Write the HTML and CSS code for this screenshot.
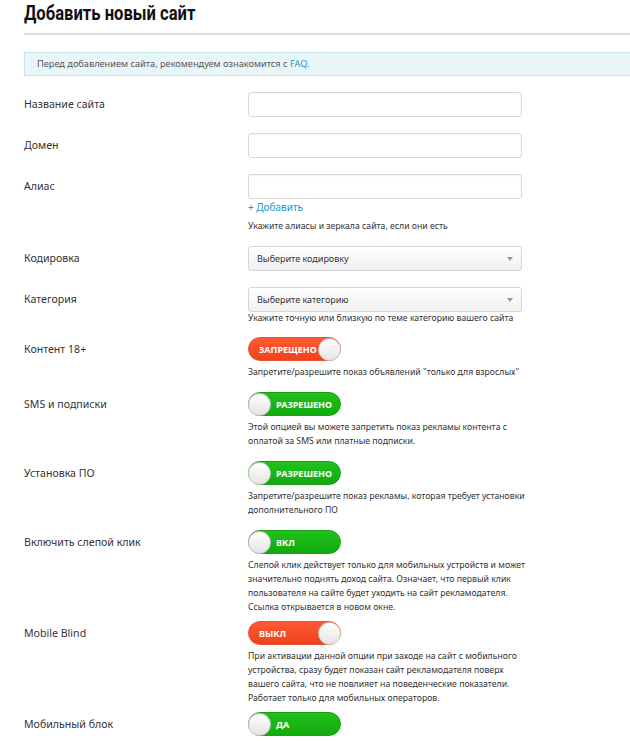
FILE: index.html
```html
<!DOCTYPE html>
<html lang="ru">
<head>
    <meta charset="UTF-8">
    <meta name="viewport" content="width=device-width, initial-scale=1.0">
    <title>Добавить новый сайт</title>
    <link rel="stylesheet" href="styles.css">
</head>
<body>
    <div class="page">
        <h1 class="title"><span>Добавить новый сайт</span></h1>

        <div class="notice">Перед добавлением сайта, рекомендуем ознакомится с <a href="#">FAQ</a>.</div>

        <form class="site-form">
            <div class="row">
                <label class="label">Название сайта</label>
                <div class="field"><input class="input" type="text"></div>
            </div>
            <div class="row">
                <label class="label">Домен</label>
                <div class="field"><input class="input" type="text"></div>
            </div>
            <div class="row row-note">
                <label class="label">Алиас</label>
                <div class="field">
                    <input class="input" type="text">
                    <a class="add-link" href="#">+ Добавить</a>
                    <p class="note note-alias">Укажите алиасы и зеркала сайта, если они есть</p>
                </div>
            </div>
            <div class="row">
                <label class="label">Кодировка</label>
                <div class="field">
                    <div class="select"><span>Выберите кодировку</span><i class="arrow"></i></div>
                </div>
            </div>
            <div class="row row-note">
                <label class="label">Категория</label>
                <div class="field">
                    <div class="select"><span>Выберите категорию</span><i class="arrow"></i></div>
                    <p class="note note-tight">Укажите точную или близкую по теме категорию вашего сайта</p>
                </div>
            </div>
            <div class="row row-note">
                <label class="label">Контент 18+</label>
                <div class="field">
                    <span class="toggle off"><span class="toggle-text">Запрещено</span><span class="knob"></span></span>
                    <p class="note">Запретите/разрешите показ объявлений "только для взрослых"</p>
                </div>
            </div>
            <div class="row row-note">
                <label class="label">SMS и подписки</label>
                <div class="field">
                    <span class="toggle on"><span class="knob"></span><span class="toggle-text">Разрешено</span></span>
                    <p class="note">Этой опцией вы можете запретить показ рекламы контента с<br>оплатой за SMS или платные подписки.</p>
                </div>
            </div>
            <div class="row row-note">
                <label class="label">Установка ПО</label>
                <div class="field">
                    <span class="toggle on"><span class="knob"></span><span class="toggle-text">Разрешено</span></span>
                    <p class="note">Запретите/разрешите показ рекламы, которая требует установки<br>дополнительного ПО</p>
                </div>
            </div>
            <div class="row row-long">
                <label class="label">Включить слепой клик</label>
                <div class="field">
                    <span class="toggle on"><span class="knob"></span><span class="toggle-text">Вкл</span></span>
                    <p class="note">Слепой клик действует только для мобильных устройств и может<br>значительно поднять доход сайта. Означает, что первый клик<br>пользователя на сайте будет уходить на сайт рекламодателя.<br>Ссылка открывается в новом окне.</p>
                </div>
            </div>
            <div class="row row-long">
                <label class="label">Mobile Blind</label>
                <div class="field">
                    <span class="toggle off"><span class="toggle-text">Выкл</span><span class="knob"></span></span>
                    <p class="note">При активации данной опции при заходе на сайт с мобильного<br>устройства, сразу будет показан сайт рекламодателя поверх<br>вашего сайта, что не повлияет на поведенческие показатели.<br>Работает только для мобильных операторов.</p>
                </div>
            </div>
            <div class="row">
                <label class="label">Мобильный блок</label>
                <div class="field">
                    <span class="toggle on"><span class="knob"></span><span class="toggle-text">Да</span></span>
                </div>
            </div>
        </form>
    </div>
</body>
</html>
```

FILE: styles.css
```css
* {
    margin: 0;
    padding: 0;
    box-sizing: border-box;
}

body {
    background: #fff;
    color: #333;
    font-family: "Noto Sans", "Liberation Sans", sans-serif;
    overflow: hidden;
}

.page {
    padding: 0 0 0 24px;
    overflow: hidden;
}

/* заголовок в узком начертании */
.title {
    font-family: "Roboto", "Liberation Sans", sans-serif;
    font-size: 21px;
    font-weight: 700;
    color: #111;
    line-height: 26px;
    height: 35px;
    border-bottom: 2px solid #dcdcdc;
}

.title span {
    display: inline-block;
    transform: scaleX(0.79);
    transform-origin: left center;
    white-space: nowrap;
}

.notice {
    margin: 17px -20px 0 0;
    height: 24px;
    line-height: 22px;
    padding-left: 12px;
    font-size: 9.2px;
    color: #555;
    background: #e9f6f9;
    border: 1px solid #c3e5e6;
}

.notice a {
    color: #1b96c4;
    text-decoration: none;
}

.site-form {
    padding-top: 16px;
}

.row {
    display: grid;
    grid-template-columns: 224px 1fr;
    margin-bottom: 16px;
}

.row-note {
    margin-bottom: 13px;
}

.row-long {
    margin-bottom: 7px;
}

.label {
    font-size: 10.6px;
    line-height: 25px;
    color: #333;
}

.input {
    display: block;
    width: 274px;
    height: 25px;
    border: 1px solid #d8d8d8;
    border-radius: 3px;
    box-shadow: inset 0 1px 2px rgba(0, 0, 0, 0.05);
    background: #fff;
}

.add-link {
    display: block;
    margin-top: 1px;
    font-size: 10px;
    line-height: 14px;
    color: #1b96c4;
    text-decoration: none;
}

.select {
    display: flex;
    align-items: center;
    justify-content: space-between;
    width: 274px;
    height: 25px;
    padding: 0 8px;
    border: 1px solid #d6d6d6;
    border-radius: 3px;
    background: linear-gradient(#ffffff, #f0f0f0);
    font-size: 9px;
    color: #333;
}

.arrow {
    width: 0;
    height: 0;
    border-left: 3px solid transparent;
    border-right: 3px solid transparent;
    border-top: 4px solid #999;
}

.note {
    margin-top: 4px;
    font-size: 8.7px;
    line-height: 14px;
    color: #333;
    white-space: nowrap;
}

.note-alias {
    margin-top: 5px;
}

.note-tight {
    margin-top: 0;
    line-height: 12px;
}

.toggle {
    display: flex;
    align-items: center;
    width: 93px;
    height: 24px;
    padding: 1px;
    border-radius: 12px;
    color: #fff;
    font-size: 9px;
    font-weight: 700;
    text-transform: uppercase;
}

.toggle.off {
    background: linear-gradient(#ff5a33, #ee421c);
    border: 1px solid #e9502f;
    padding-left: 10px;
}

.toggle.on {
    background: linear-gradient(#20c21a, #12a90e);
    border: 1px solid #199f14;
}

.toggle-text {
    flex: 1;
}

.toggle.on .toggle-text {
    padding-left: 5px;
}

.knob {
    width: 23px;
    height: 23px;
    border-radius: 50%;
    background: linear-gradient(#ffffff, #e4e4e4);
    border: 1px solid #c9c9c9;
    flex-shrink: 0;
}

.toggle.off .knob {
    margin-right: -2px;
}

.toggle.on .knob {
    margin-left: -2px;
}
```
